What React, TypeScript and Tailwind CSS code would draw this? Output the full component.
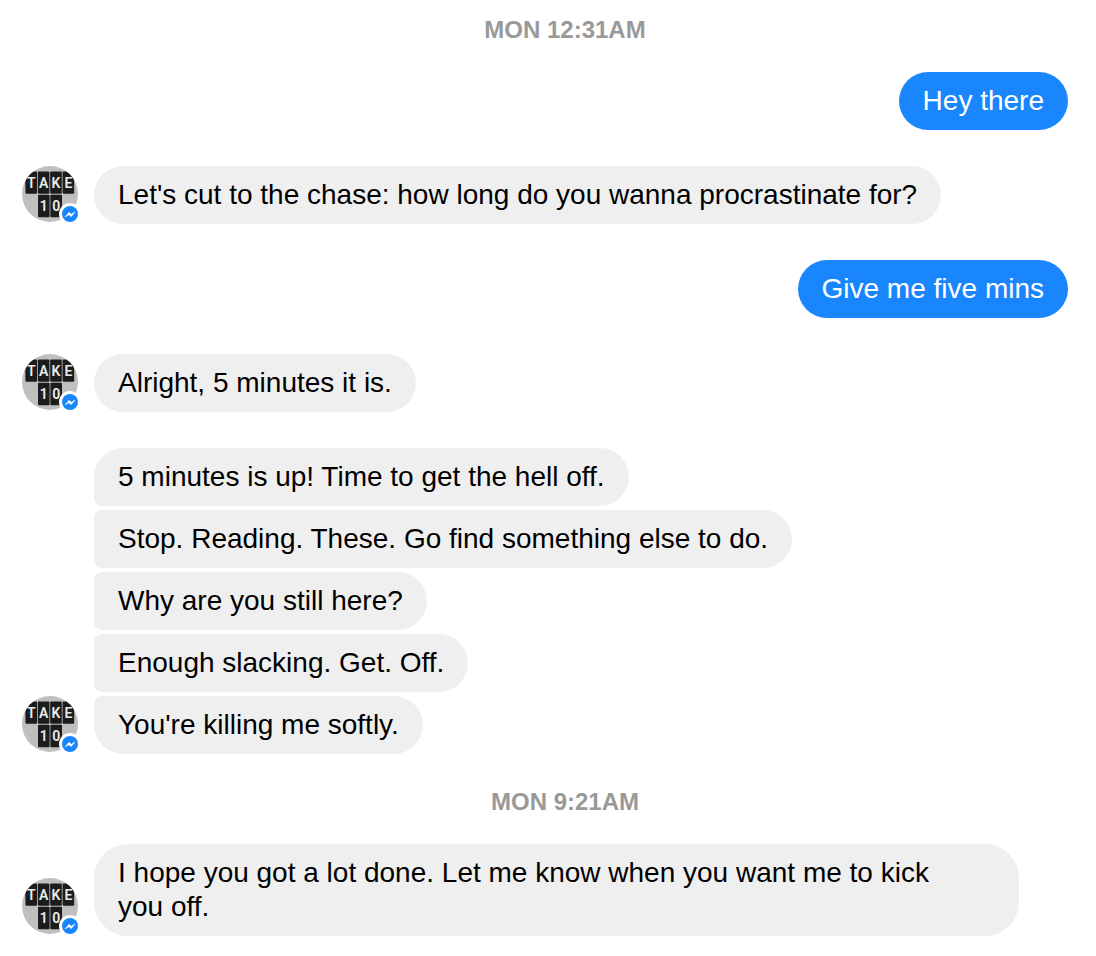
import clsx from "clsx";

type Position = "single" | "first" | "middle" | "last";

function Tile({ x, y, char }: { x: number; y: number; char: string }) {
  return (
    <g>
      <rect x={x} y={y} width="11.6" height="22.4" rx="1" fill="#1c1c1c" />
      <path d={`M${x} ${y + 11.2}h11.6`} stroke="#303030" strokeWidth="0.7" />
      <text
        x={x + 5.8}
        y={y + 16.6}
        textAnchor="middle"
        fontSize="14"
        fontWeight="600"
        fontFamily="Roboto, 'Liberation Sans', sans-serif"
        fill="#ececec"
      >
        {char}
      </text>
    </g>
  );
}

function Avatar() {
  return (
    <svg
      viewBox="0 0 56 56"
      className="size-14 shrink-0 overflow-visible"
      role="img"
      aria-label="Take 10"
    >
      <defs>
        <clipPath id="avatar-clip">
          <circle cx="28" cy="28" r="28" />
        </clipPath>
      </defs>
      <g clipPath="url(#avatar-clip)">
        <rect width="56" height="56" fill="#bfbfbf" />
        <Tile x={3.4} y={5.4} char="T" />
        <Tile x={15.8} y={5.4} char="A" />
        <Tile x={28.2} y={5.4} char="K" />
        <Tile x={40.6} y={5.4} char="E" />
        <Tile x={16} y={28.8} char="1" />
        <Tile x={28.4} y={28.8} char="0" />
      </g>
      <circle cx="48" cy="48" r="11" fill="#fff" />
      <circle cx="48" cy="48" r="8" fill="#1a86fe" />
      <path
        d="M43.2 50.8 47.1 46.3 49.3 48.3 53 46 49.2 50.6 46.8 48.8Z"
        fill="#fff"
        stroke="#fff"
        strokeWidth="0.6"
        strokeLinejoin="round"
      />
    </svg>
  );
}

function Timestamp({ children }: { children: string }) {
  return (
    <time className="block pl-10 text-center text-2xl leading-7 font-bold text-[#999999]">
      {children}
    </time>
  );
}

function Sent({ children }: { children: string }) {
  return (
    <div className="flex justify-end">
      <p className="rounded-[29px] bg-[#1a86fe] px-6 py-3 text-[28px] leading-[34px] text-white">
        {children}
      </p>
    </div>
  );
}

function Received({
  children,
  position = "single",
}: {
  children: string;
  position?: Position;
}) {
  const showAvatar = position === "single" || position === "last";
  return (
    <div className="flex items-end gap-4">
      <div className="w-14 shrink-0 pb-0.5">{showAvatar && <Avatar />}</div>
      <div className="min-w-0 flex-1">
        <p
          className={clsx(
            "w-fit max-w-[95%] bg-[#efefef] px-6 py-3 text-[28px] leading-[34px] text-black",
            position === "single" && "rounded-[34px]",
            position === "first" && "rounded-r-[29px] rounded-tl-[29px] rounded-bl-lg",
            position === "middle" && "rounded-r-[29px] rounded-l-lg",
            position === "last" && "rounded-r-[29px] rounded-tl-lg rounded-bl-[29px]",
          )}
        >
          {children}
        </p>
      </div>
    </div>
  );
}

export default function App() {
  return (
    <main className="min-h-screen bg-white pt-4 pr-7 pb-5 pl-[22px] font-['Liberation_Sans',Arial,sans-serif]">
      <Timestamp>MON 12:31AM</Timestamp>
      <section className="mt-7 flex flex-col gap-9">
        <Sent>Hey there</Sent>
        <Received>Let's cut to the chase: how long do you wanna procrastinate for?</Received>
        <Sent>Give me five mins</Sent>
        <Received>Alright, 5 minutes it is.</Received>
        <div className="flex flex-col gap-1">
          <Received position="first">5 minutes is up! Time to get the hell off.</Received>
          <Received position="middle">Stop. Reading. These. Go find something else to do.</Received>
          <Received position="middle">Why are you still here?</Received>
          <Received position="middle">Enough slacking. Get. Off.</Received>
          <Received position="last">You're killing me softly.</Received>
        </div>
      </section>
      <div className="mt-[34px]">
        <Timestamp>MON 9:21AM</Timestamp>
      </div>
      <section className="mt-7">
        <Received>
          I hope you got a lot done. Let me know when you want me to kick you&nbsp;off.
        </Received>
      </section>
    </main>
  );
}
